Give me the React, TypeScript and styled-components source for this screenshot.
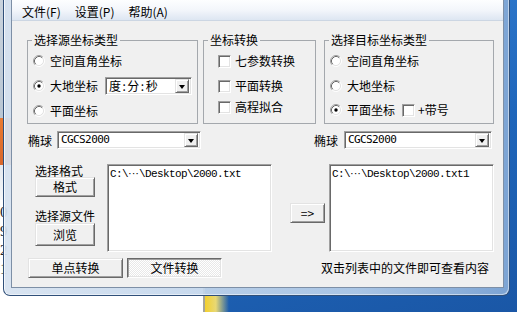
import styled, { createGlobalStyle, css } from 'styled-components';

const GlobalStyle = createGlobalStyle`
  html, body {
    margin: 0;
    padding: 0;
  }
  body {
    width: 517px;
    height: 312px;
    overflow: hidden;
    font-family: "Noto Sans CJK SC", "Liberation Sans", sans-serif;
    font-size: 12px;
    color: #000;
  }
`;

const Desktop = styled.div`
  position: relative;
  width: 517px;
  height: 312px;
  overflow: hidden;
  background: linear-gradient(165deg, #3b86d8 0%, #1f66bb 55%, #1a57a6 100%);
`;

// the window lying behind ours, only a strip of it shows
const BackWindow = styled.div`
  position: absolute;
  left: 0;
  top: 0;
  width: 203px;
  height: 312px;
  background: linear-gradient(
    to bottom,
    #c9d3dd 0,
    #b9c6d3 118px,
    #ea7a30 118px,
    #d9662a 165px,
    #e4e9ef 165px,
    #f4f6f8 200px,
    #fff 200px
  );
  border-right: 2px solid #a6a59a;
`;

const BackDigits = styled.div`
  position: absolute;
  left: 0;
  top: 203px;
  font-family: "Liberation Serif", serif;
  font-size: 15px;
  line-height: 19px;
  color: #222;
  white-space: pre;
`;

const Glow = styled.div`
  position: absolute;
  left: 205px;
  top: 296px;
  width: 24px;
  height: 16px;
  background: linear-gradient(to right, #f3d02e, #e8d874 45%, rgba(60, 130, 215, 0));
`;

const Window = styled.div`
  position: absolute;
  left: 3px;
  top: 0;
  width: 507px;
  height: 296px;
  box-sizing: border-box;
  display: flex;
  padding: 0 5px 7px 7px;
  border: 1px solid #30507a;
  border-top: none;
  border-radius: 0 0 7px 7px;
  background: linear-gradient(
    to right,
    rgba(214, 226, 240, 0.93),
    rgba(180, 205, 233, 0.93) 70%,
    rgba(130, 168, 214, 0.95)
  );
  box-shadow: inset 1px 0 rgba(255, 255, 255, 0.7), inset -1px -1px rgba(255, 255, 255, 0.5);
`;

const Client = styled.div`
  flex: 1;
  display: flex;
  flex-direction: column;
  background: #f0f0f0;
  border: 1px solid #7d8fa6;
  border-top: none;
`;

const MenuBar = styled.div`
  box-sizing: border-box;
  height: 21px;
  display: flex;
  padding: 3px 0 0 3px;
  background: linear-gradient(to bottom, #fdfeff 0%, #f3f6fb 50%, #dde6f2 100%);
  border-bottom: 1px solid #ccd6e3;
`;

const MenuItem = styled.span`
  padding: 0 7px;
  line-height: 17px;
`;

const Body = styled.div`
  display: flex;
  flex-direction: column;
  padding: 12px 9px 0 15px;
`;

const GroupRow = styled.div`
  display: flex;
`;

const Group = styled.fieldset<{ $w: number; $ml?: number }>`
  box-sizing: border-box;
  width: ${p => p.$w}px;
  height: 91px;
  min-inline-size: 0;
  margin: 0 0 0 ${p => p.$ml ?? 0}px;
  padding: 0;
  border: 1px solid #a4a8ad;
`;

const Legend = styled.legend`
  margin-left: 4px;
  padding: 0 2px;
  height: 14px;
  line-height: 14px;
`;

const GroupBody = styled.div<{ $pl: number }>`
  display: flex;
  flex-direction: column;
  padding-left: ${p => p.$pl}px;
`;

const OptionRow = styled.div<{ $mt: number }>`
  display: flex;
  align-items: center;
  min-height: 16px;
  margin-top: ${p => p.$mt}px;
  line-height: 16px;
  white-space: nowrap;
`;

const OptionText = styled.span<{ $gap: number }>`
  margin-left: ${p => p.$gap}px;
`;

const RadioSvg = styled.svg`
  flex: none;
  display: block;
`;

const CheckBox = styled.span<{ $ml?: number }>`
  flex: none;
  box-sizing: border-box;
  width: 13px;
  height: 13px;
  margin-left: ${p => p.$ml ?? 0}px;
  background: #fff;
  border-top: 1px solid #a0a0a0;
  border-left: 1px solid #a0a0a0;
  border-right: 1px solid #fff;
  border-bottom: 1px solid #fff;
  box-shadow: inset 1px 1px #696969, inset -1px -1px #e3e3e3;
`;

const sunken = css`
  border-top: 1px solid #a0a0a0;
  border-left: 1px solid #a0a0a0;
  border-right: 1px solid #fff;
  border-bottom: 1px solid #fff;
  box-shadow: inset 1px 1px #696969, inset -1px -1px #e3e3e3;
`;

const Combo = styled.div<{ $w: number; $ml?: number }>`
  box-sizing: border-box;
  width: ${p => p.$w}px;
  height: 18px;
  margin-left: ${p => p.$ml ?? 0}px;
  display: flex;
  align-items: center;
  padding: 2px;
  background: #fff;
  ${sunken}
`;

const ComboText = styled.span<{ $latin?: boolean }>`
  flex: 1;
  padding-left: 1px;
  line-height: 14px;
  letter-spacing: 1.5px;
  ${p =>
    p.$latin &&
    css`
      font-family: "DejaVu Sans Mono", monospace;
      font-size: 11px;
      letter-spacing: -0.6px;
    `}
`;

const DropButton = styled.span`
  flex: none;
  box-sizing: border-box;
  width: 14px;
  height: 14px;
  display: flex;
  align-items: center;
  justify-content: center;
  background: #f0f0f0;
  border-top: 1px solid #e3e3e3;
  border-left: 1px solid #e3e3e3;
  border-right: 1px solid #696969;
  border-bottom: 1px solid #696969;
  box-shadow: inset 1px 1px #fff, inset -1px -1px #a0a0a0;

  &::after {
    content: "";
    border-top: 4px solid #000;
    border-left: 3.5px solid transparent;
    border-right: 3.5px solid transparent;
    margin-top: 1px;
  }
`;

const EllipsoidRow = styled.div`
  display: flex;
  justify-content: space-between;
  align-items: center;
  margin-top: 7px;
  height: 18px;
`;

const Field = styled.div<{ $ml?: number; $mr?: number }>`
  display: flex;
  align-items: center;
  margin-left: ${p => p.$ml ?? 0}px;
  margin-right: ${p => p.$mr ?? 0}px;
`;

const FilesRow = styled.div`
  display: flex;
  align-items: flex-start;
  margin-top: 15px;
  height: 88px;
`;

const SideColumn = styled.div`
  display: flex;
  flex-direction: column;
  width: 60px;
  margin-left: 8px;
`;

const SideLabel = styled.div<{ $mt: number }>`
  margin-top: ${p => p.$mt}px;
  line-height: 13px;
  white-space: nowrap;
`;

const Button = styled.button<{ $w: number; $h: number; $ml?: number; $mt?: number; $pressed?: boolean }>`
  box-sizing: border-box;
  flex: none;
  width: ${p => p.$w}px;
  height: ${p => p.$h}px;
  margin: ${p => p.$mt ?? 0}px 0 0 ${p => p.$ml ?? 0}px;
  padding: 0;
  font: inherit;
  line-height: 16px;
  color: #000;
  background: #f0f0f0;
  border-top: 1px solid #e3e3e3;
  border-left: 1px solid #e3e3e3;
  border-right: 1px solid #696969;
  border-bottom: 1px solid #696969;
  box-shadow: inset 1px 1px #fff, inset -1px -1px #a0a0a0;

  ${p =>
    p.$pressed &&
    css`
      background: repeating-conic-gradient(#fff 0 25%, #e8e8e8 0 50%) 0 0 / 2px 2px;
      border-top-color: #696969;
      border-left-color: #696969;
      border-right-color: #fff;
      border-bottom-color: #fff;
      box-shadow: inset 1px 1px #a0a0a0, inset -1px -1px #e3e3e3;
    `}
`;

const FileList = styled.div<{ $ml?: number }>`
  box-sizing: border-box;
  width: 165px;
  height: 88px;
  margin-left: ${p => p.$ml ?? 0}px;
  padding: 2px 2px;
  background: #fff;
  ${sunken}
  font-family: "Liberation Mono", monospace;
  font-size: 11px;
  letter-spacing: -0.6px;
  line-height: 13px;
  white-space: nowrap;
`;

const Dots = styled.span`
  font-family: "Liberation Sans", sans-serif;
  font-size: 11px;
  letter-spacing: 0;
`;

const BottomRow = styled.div`
  display: flex;
  align-items: center;
  margin-top: 6px;
`;

const Hint = styled.span`
  margin-left: auto;
  margin-right: 5px;
  line-height: 16px;
`;

const Radio = ({ checked }: { checked?: boolean }) => (
  <RadioSvg width="12" height="12" viewBox="0 0 12 12">
    <circle cx="6" cy="6" r="4.5" fill="#fff" />
    <path d="M2.11 9.89A5.5 5.5 0 0 1 9.89 2.11" stroke="#a0a0a0" fill="none" />
    <path d="M2.82 9.18A4.5 4.5 0 0 1 9.18 2.82" stroke="#696969" fill="none" />
    <path d="M9.89 2.11A5.5 5.5 0 0 1 2.11 9.89" stroke="#fff" fill="none" />
    <path d="M9.18 2.82A4.5 4.5 0 0 1 2.82 9.18" stroke="#e3e3e3" fill="none" />
    {checked && <circle cx="6" cy="6" r="1.7" fill="#000" />}
  </RadioSvg>
);

const FilePath = ({ name }: { name: string }) => (
  <div>
    C:\<Dots>···</Dots>\Desktop\{name}
  </div>
);

export default function App() {
  return (
    <>
      <GlobalStyle />
      <Desktop>
        <BackWindow>
          <BackDigits>{'0\n9\n2\n1'}</BackDigits>
        </BackWindow>
        <Glow />
        <Window>
          <Client>
            <MenuBar>
              <MenuItem>文件(F)</MenuItem>
              <MenuItem>设置(P)</MenuItem>
              <MenuItem>帮助(A)</MenuItem>
            </MenuBar>
            <Body>
              <GroupRow>
                <Group $w={171}>
                  <Legend>选择源坐标类型</Legend>
                  <GroupBody $pl={5}>
                    <OptionRow $mt={6}>
                      <Radio />
                      <OptionText $gap={5}>空间直角坐标</OptionText>
                    </OptionRow>
                    <OptionRow $mt={8}>
                      <Radio checked />
                      <OptionText $gap={5}>大地坐标</OptionText>
                      <Combo $w={87} $ml={7}>
                        <ComboText>度:分:秒</ComboText>
                        <DropButton />
                      </Combo>
                    </OptionRow>
                    <OptionRow $mt={8}>
                      <Radio />
                      <OptionText $gap={5}>平面坐标</OptionText>
                    </OptionRow>
                  </GroupBody>
                </Group>
                <Group $w={113} $ml={5}>
                  <Legend>坐标转换</Legend>
                  <GroupBody $pl={14}>
                    <OptionRow $mt={6}>
                      <CheckBox />
                      <OptionText $gap={4}>七参数转换</OptionText>
                    </OptionRow>
                    <OptionRow $mt={9}>
                      <CheckBox />
                      <OptionText $gap={4}>平面转换</OptionText>
                    </OptionRow>
                    <OptionRow $mt={5}>
                      <CheckBox />
                      <OptionText $gap={4}>高程拟合</OptionText>
                    </OptionRow>
                  </GroupBody>
                </Group>
                <Group $w={170} $ml={8}>
                  <Legend>选择目标坐标类型</Legend>
                  <GroupBody $pl={5}>
                    <OptionRow $mt={6}>
                      <Radio />
                      <OptionText $gap={5}>空间直角坐标</OptionText>
                    </OptionRow>
                    <OptionRow $mt={9}>
                      <Radio />
                      <OptionText $gap={5}>大地坐标</OptionText>
                    </OptionRow>
                    <OptionRow $mt={8}>
                      <Radio checked />
                      <OptionText $gap={5}>平面坐标</OptionText>
                      <CheckBox $ml={7} />
                      <OptionText $gap={3}>+带号</OptionText>
                    </OptionRow>
                  </GroupBody>
                </Group>
              </GroupRow>

              <EllipsoidRow>
                <Field $ml={1}>
                  椭球
                  <Combo $w={144} $ml={5}>
                    <ComboText $latin>CGCS2000</ComboText>
                    <DropButton />
                  </Combo>
                </Field>
                <Field $mr={2}>
                  椭球
                  <Combo $w={148} $ml={6}>
                    <ComboText $latin>CGCS2000</ComboText>
                    <DropButton />
                  </Combo>
                </Field>
              </EllipsoidRow>

              <FilesRow>
                <SideColumn>
                  <SideLabel $mt={0}>选择格式</SideLabel>
                  <Button $w={60} $h={20}>格式</Button>
                  <SideLabel $mt={12}>选择源文件</SideLabel>
                  <Button $w={60} $h={23} $mt={1}>浏览</Button>
                </SideColumn>
                <FileList $ml={12}>
                  <FilePath name="2000.txt" />
                </FileList>
                <Button $w={35} $h={20} $ml={18} $mt={39}>=&gt;</Button>
                <FileList $ml={4}>
                  <FilePath name="2000.txt1" />
                </FileList>
              </FilesRow>

              <BottomRow>
                <Button $w={95} $h={20} $ml={1}>单点转换</Button>
                <Button $w={95} $h={20} $ml={4} $pressed>文件转换</Button>
                <Hint>双击列表中的文件即可查看内容</Hint>
              </BottomRow>
            </Body>
          </Client>
        </Window>
      </Desktop>
    </>
  );
}
